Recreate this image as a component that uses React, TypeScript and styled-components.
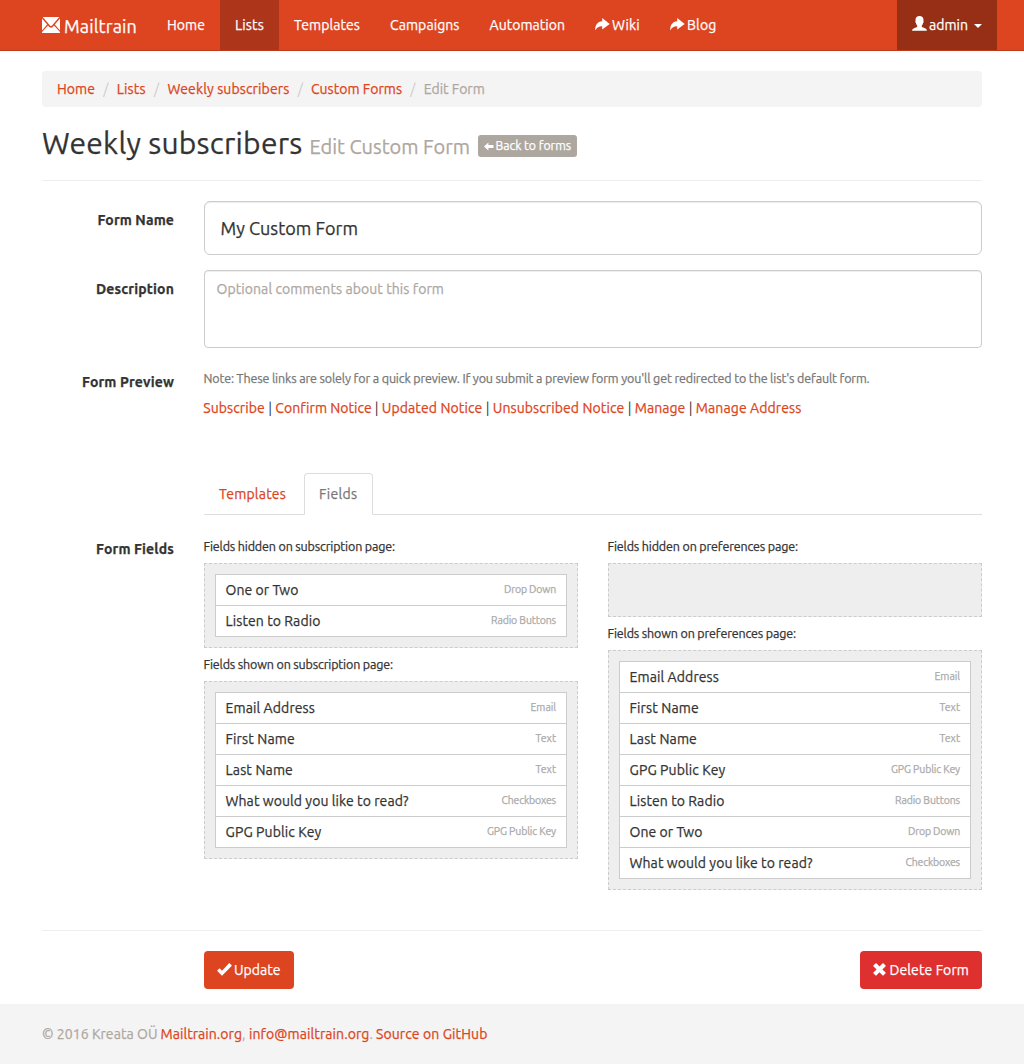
import React, { useLayoutEffect, useRef, useState } from "react";
import styled, { createGlobalStyle, css } from "styled-components";

const brand = "#dd4420";
const sans = `"Ubuntu", "Noto Sans", "Open Sans", sans-serif`;

const GlobalStyle = createGlobalStyle`
  *, *::before, *::after { box-sizing: border-box; }
  body {
    margin: 0;
    background: #fff;
    color: #333;
    font-family: ${sans};
    font-size: 14px;
    line-height: 20px;
    -webkit-text-stroke: 0.25px currentColor;
  }
  a { color: ${brand}; text-decoration: none; -webkit-text-stroke-color: currentColor; }
`;

/* Text set to a fixed measure, tracked evenly to fill it. */
const Measure = styled.span<{ $w: number }>`
  display: inline-block;
  width: ${(p) => p.$w}px;
  white-space: nowrap;
  -webkit-text-stroke-color: currentColor;
`;

function Fit({ w, children }: { w: number; children: string }) {
  const ref = useRef<HTMLSpanElement>(null);
  const [tracking, setTracking] = useState(0);
  useLayoutEffect(() => {
    const el = ref.current;
    if (!el) return;
    el.style.letterSpacing = "0px";
    const natural = el.getBoundingClientRect().width;
    const next = (w - natural) / children.length;
    el.style.letterSpacing = `${next}px`;
    setTracking(next);
  }, [w, children]);
  return (
    <Measure $w={w}>
      <span ref={ref} style={{ letterSpacing: tracking }}>
        {children}
      </span>
    </Measure>
  );
}

const Icon = styled.svg<{ $gap?: number; $drop?: number }>`
  display: block;
  flex: none;
  fill: currentColor;
  margin-right: ${(p) => p.$gap ?? 0}px;
  margin-top: ${(p) => p.$drop ?? 0}px;
`;

const EnvelopeIcon = () => (
  <Icon width="18" height="16" viewBox="0 0 18 16" $gap={4} $drop={-1}>
    <path d="M.7 0h16.6L10 8.6q-1 1-2 0z" />
    <path d="M0 1.4 5.2 7.6 0 13.4z" />
    <path d="M18 1.4v12L12.8 7.6z" />
    <path d="M6 8.5 7.3 10q1.7 1.6 3.4 0L12 8.5l6 6.4V16H0v-1.1z" />
  </Icon>
);

const ShareIcon = () => (
  <Icon width="15" height="13" viewBox="0 0 15 13" $gap={2} $drop={-2}>
    <path d="M7.200 0l7.500 5.900L7.200 11.600V8.300C4.200 8.200 1.900 9.300.2 12.400 0 7.200 2.500 3.500 7.200 3.200z" />
  </Icon>
);

const UserIcon = () => (
  <Icon width="15" height="15" viewBox="0 0 15 15" $gap={2} $drop={-3}>
    <path d="M7.500 0C9.900 0 11.500 1.500 11.500 3.800c0 .5-.1.900-.1 1.200.5.300.3 1.500-.3 2-.2 1.100-.7 1.900-1.300 2.500v1.100c0 .6 1 .9 2.500 1.500 1.700.6 2.500 1.100 2.600 2.700H.1c.1-1.600.9-2.100 2.600-2.700 1.500-.6 2.500-.9 2.500-1.500V9.500C4.600 8.900 4.100 8.100 3.900 7c-.6-.5-.8-1.700-.3-2 0-.3-.1-.7-.1-1.200C3.500 1.500 5.100 0 7.500 0z" />
  </Icon>
);

const ArrowIcon = () => (
  <Icon width="10" height="9" viewBox="0 0 10 9" $gap={1.5} $drop={2}>
    <path d="M0 4.500 4.400.5v2.400H9q.5 0 .5.500v2.200q0 .5-.5.500H4.400v2.400z" />
  </Icon>
);

const OkIcon = () => (
  <Icon width="15" height="13" viewBox="0 0 15 13" $gap={2.5} $drop={-1}>
    <path d="M12 .2q.3-.2.6.1l2 2q.3.300 0 .6L5.300 12.500q-.3.300-.6 0L.3 8.100Q0 7.800.3 7.500l1.900-1.900q.3-.3.600 0L5 7.700z" />
  </Icon>
);

const RemoveIcon = () => (
  <Icon width="13" height="13" viewBox="0 0 13 13" $gap={3.5} $drop={-2}>
    <path d="M3.300.3 6.500 3.500 9.700.3q.3-.3.600 0l2.300 2.300q.3.300 0 .6L9.400 6.400l3.200 3.200q.3.300 0 .6l-2.300 2.300q-.3.300-.6 0L6.500 9.300 3.300 12.500q-.3.300-.6 0L.4 10.200q-.3-.3 0-.6L3.600 6.400.4 3.200q-.3-.3 0-.6L2.700.3q.3-.3.600 0z" />
  </Icon>
);

const Navbar = styled.nav`
  height: 51px;
  background: ${brand};
  border-bottom: 1px solid #bd3a1b;
`;

const NavInner = styled.div`
  width: 970px;
  margin: 0 auto;
  display: flex;
`;

const Brand = styled.a`
  height: 50px;
  padding: 0 15px;
  display: flex;
  align-items: center;
  font-size: 18px;
  && { color: #fff; }
`;

const BrandText = styled.span`
  margin-top: 2px;
`;

const NavLink = styled.a<{ $tone?: string; $end?: boolean }>`
  height: 50px;
  padding: 0 15px;
  display: flex;
  align-items: center;
  background: ${(p) => p.$tone ?? "transparent"};
  && { color: #fff; }
  ${(p) => p.$end && css`margin-left: auto;`}
`;

const Caret = styled.i`
  margin: 1px 0 0 6px;
  border: 4px solid transparent;
  border-top-color: currentColor;
  border-bottom: 0;
`;

const Page = styled.main`
  width: 940px;
  margin: 20px auto 0;
`;

const Breadcrumb = styled.ol`
  display: flex;
  height: 36px;
  margin: 0;
  padding: 8px 15px;
  list-style: none;
  background: #f4f4f4;
  border-radius: 4px;
`;

const Crumb = styled.li`
  display: flex;
  color: #aea79f;
  & + &::before {
    content: "/";
    width: 21.700px;
    text-align: center;
    color: #ccc;
    -webkit-text-stroke: 0;
  }
`;

const PageHeader = styled.header`
  display: flex;
  align-items: baseline;
  height: 74px;
  padding-top: 17px;
  border-bottom: 1px solid #eee;
`;

const Title = styled.h2`
  margin: 0 7px 0 0;
  font-size: 30px;
  font-weight: 400;
  line-height: 38px;
`;

const Subtitle = styled.small`
  margin-right: 8px;
  color: #aea79f;
  font-size: 20px;
`;

const BackButton = styled.a`
  position: relative;
  top: -3px;
  display: inline-flex;
  align-items: center;
  width: 99px;
  height: 22px;
  padding: 0 6px;
  border-radius: 3px;
  background: #aea79f;
  font-size: 12.300px;
  && { color: #fff; }
`;

const FormRow = styled.div<{ $space: number }>`
  display: grid;
  grid-template-columns: 132px 1fr;
  column-gap: 30px;
  align-items: start;
  margin-top: ${(p) => p.$space}px;
`;

const Label = styled.label`
  padding-top: 9px;
  text-align: right;
  font-weight: 700;
`;

const control = css`
  display: block;
  width: 100%;
  border: 1px solid #ccc;
  border-radius: 4px;
  background: #fff;
  box-shadow: inset 0 1px 1px rgba(0, 0, 0, 0.075);
`;

const NameField = styled.div`
  ${control}
  height: 54px;
  padding: 0 15.500px;
  border-radius: 6px;
  font-size: 18px;
  line-height: 53px;
`;

const DescriptionField = styled.div`
  ${control}
  height: 78px;
  padding: 8px 11.500px;
  color: #aea79f;
`;

const Note = styled.p`
  margin: 0 0 0 -0.5px;
  height: 35px;
  padding-top: 5px;
  color: #777;
  font-size: 12.500px;
`;

const PreviewLinks = styled.div`
  display: flex;
  margin-left: -0.700px;
`;

const Bar = styled.span`
  width: 10.500px;
  text-align: center;
  -webkit-text-stroke: 0;
`;

const Tabs = styled.ul`
  display: flex;
  height: 42px;
  margin: 55px 0 0 162px;
  padding: 0;
  list-style: none;
  border-bottom: 1px solid #ddd;
`;

const Tab = styled.li<{ $active?: boolean; $w: number }>`
  width: ${(p) => p.$w}px;
  height: 42px;
  margin-right: 2px;
  padding: 10px 14px;
  border: 1px solid transparent;
  border-radius: 4px 4px 0 0;
  ${(p) =>
    p.$active &&
    css`
      color: #777;
      background: #fff;
      border-color: #ddd #ddd #fff;
    `}
`;

const Columns = styled.div`
  display: grid;
  grid-template-columns: 1fr 1fr;
  column-gap: 30px;
`;

const GroupTitle = styled.div`
  height: 33px;
  margin-left: -0.5px;
  padding-top: 6px;
  font-size: 12.500px;
`;

const DropZone = styled.div`
  min-height: 54px;
  padding: 10px;
  border: 1px dashed #ccc;
  background: #eee;
`;

const FieldList = styled.ul`
  margin: 0;
  padding: 0;
  list-style: none;
  border: 1px solid #ccc;
`;

const FieldItem = styled.li`
  display: flex;
  justify-content: space-between;
  height: 30px;
  padding: 0 10px 0 9.500px;
  background: #fff;
  line-height: 30px;
  & + & {
    height: 31px;
    border-top: 1px solid #ccc;
  }
`;

const FieldType = styled.small`
  color: #aaa;
  font-size: 10.500px;
  line-height: 29px;
`;

const Actions = styled.div`
  display: flex;
  justify-content: space-between;
  margin-top: 40px;
  padding: 20px 0 15px 162px;
  border-top: 1px solid #eee;
`;

const Button = styled.button<{ $danger?: boolean; $w: number }>`
  display: flex;
  align-items: center;
  width: ${(p) => p.$w}px;
  height: 38px;
  padding: 0 0 0 ${(p) => (p.$danger ? 13 : 12.5)}px;
  border: 0;
  border-radius: 4px;
  background: ${(p) => (p.$danger ? "#df3030" : brand)};
  color: #fff;
  font: 400 14px/20px ${sans};
`;

const Footer = styled.footer`
  height: 60px;
  background: #f4f4f4;
`;

const FooterInner = styled.div`
  display: flex;
  width: 940px;
  margin: 0 auto;
  padding-top: 20px;
  color: #aea79f;
  white-space: pre;
`;

const Gap = styled.span<{ $w: number }>`
  width: ${(p) => p.$w}px;
  -webkit-text-stroke: 0;
`;

type Field = [string, number, string, number];

const email: Field = ["Email Address", 89.5, "Email", 25.5];
const first: Field = ["First Name", 69.5, "Text", 20.5];
const last: Field = ["Last Name", 67.5, "Text", 20.5];
const gpg: Field = ["GPG Public Key", 96, "GPG Public Key", 69];
const radio: Field = ["Listen to Radio", 95, "Radio Buttons", 65];
const oneTwo: Field = ["One or Two", 73, "Drop Down", 52];
const read: Field = ["What would you like to read?", 183, "Checkboxes", 54.5];

function Group({ title, w, fields }: { title: string; w: number; fields: Field[] }) {
  return (
    <div>
      <GroupTitle>
        <Fit w={w}>{title}</Fit>
      </GroupTitle>
      <DropZone>
        {fields.length > 0 && (
          <FieldList>
            {fields.map(([name, nameW, type, typeW]) => (
              <FieldItem key={name}>
                <Fit w={nameW}>{name}</Fit>
                <FieldType>
                  <Fit w={typeW}>{type}</Fit>
                </FieldType>
              </FieldItem>
            ))}
          </FieldList>
        )}
      </DropZone>
    </div>
  );
}

const crumbs: [string, number][] = [
  ["Home", 38],
  ["Lists", 29],
  ["Weekly subscribers", 122],
  ["Custom Forms", 91],
];

const previews: [string, number][] = [
  ["Subscribe", 61.5],
  ["Confirm Notice", 96],
  ["Updated Notice", 100.5],
  ["Unsubscribed Notice", 131.5],
  ["Manage", 50.5],
  ["Manage Address", 105.5],
];

export default function App() {
  return (
    <>
      <GlobalStyle />
      <Navbar>
        <NavInner>
          <Brand href="#">
            <EnvelopeIcon />
            <BrandText><Fit w={73}>Mailtrain</Fit></BrandText>
          </Brand>
          <NavLink href="#"><Fit w={38}>Home</Fit></NavLink>
          <NavLink href="#" $tone="#ad3519"><Fit w={29}>Lists</Fit></NavLink>
          <NavLink href="#"><Fit w={66}>Templates</Fit></NavLink>
          <NavLink href="#"><Fit w={69.5}>Campaigns</Fit></NavLink>
          <NavLink href="#"><Fit w={75.5}>Automation</Fit></NavLink>
          <NavLink href="#"><ShareIcon /><Fit w={28}>Wiki</Fit></NavLink>
          <NavLink href="#"><ShareIcon /><Fit w={29.5}>Blog</Fit></NavLink>
          <NavLink href="#" $tone="#972e16" $end>
            <UserIcon />
            <Fit w={39}>admin</Fit>
            <Caret />
          </NavLink>
        </NavInner>
      </Navbar>

      <Page>
        <Breadcrumb>
          {crumbs.map(([text, w]) => (
            <Crumb key={text}>
              <a href="#"><Fit w={w}>{text}</Fit></a>
            </Crumb>
          ))}
          <Crumb><Fit w={61}>Edit Form</Fit></Crumb>
        </Breadcrumb>

        <PageHeader>
          <Title><Fit w={260.5}>Weekly subscribers</Fit></Title>
          <Subtitle><Fit w={160.5}>Edit Custom Form</Fit></Subtitle>
          <BackButton href="#">
            <ArrowIcon />
            <Fit w={75.5}>Back to forms</Fit>
          </BackButton>
        </PageHeader>

        <FormRow $space={20}>
          <Label><Fit w={76.5}>Form Name</Fit></Label>
          <NameField><Fit w={137.5}>My Custom Form</Fit></NameField>
        </FormRow>

        <FormRow $space={15}>
          <Label><Fit w={78}>Description</Fit></Label>
          <DescriptionField><Fit w={227.5}>Optional comments about this form</Fit></DescriptionField>
        </FormRow>

        <FormRow $space={15}>
          <Label><Fit w={92}>Form Preview</Fit></Label>
          <div>
            <Note>
              <Fit w={666}>
                Note: These links are solely for a quick preview. If you submit a preview form you'll get redirected to the list's default form.
              </Fit>
            </Note>
            <PreviewLinks>
              {previews.map(([text, w], i) => (
                <React.Fragment key={text}>
                  {i > 0 && <Bar>|</Bar>}
                  <a href="#"><Fit w={w}>{text}</Fit></a>
                </React.Fragment>
              ))}
            </PreviewLinks>
          </div>
        </FormRow>

        <Tabs>
          <Tab $w={98}><a href="#"><Fit w={67}>Templates</Fit></a></Tab>
          <Tab $w={69} $active><Fit w={38.5}>Fields</Fit></Tab>
        </Tabs>

        <FormRow $space={15}>
          <Label><Fit w={78}>Form Fields</Fit></Label>
          <Columns>
            <div>
              <Group title="Fields hidden on subscription page:" w={191.5} fields={[oneTwo, radio]} />
              <Group title="Fields shown on subscription page:" w={189.5} fields={[email, first, last, read, gpg]} />
            </div>
            <div>
              <Group title="Fields hidden on preferences page:" w={190.5} fields={[]} />
              <Group title="Fields shown on preferences page:" w={188.5} fields={[email, first, last, gpg, radio, oneTwo, read]} />
            </div>
          </Columns>
        </FormRow>

        <Actions>
          <Button $w={90}><OkIcon /><Fit w={46.5}>Update</Fit></Button>
          <Button $w={122} $danger><RemoveIcon /><Fit w={79.5}>Delete Form</Fit></Button>
        </Actions>
      </Page>

      <Footer>
        <FooterInner>
          <Fit w={115.5}>© 2016 Kreata OÜ</Fit>
          <Gap $w={3} />
          <a href="#"><Fit w={81.5}>Mailtrain.org</Fit></a>
          <Gap $w={7}>,</Gap>
          <a href="#"><Fit w={120.5}>info@mailtrain.org</Fit></a>
          <Gap $w={6.5}>.</Gap>
          <a href="#"><Fit w={111.5}>Source on GitHub</Fit></a>
        </FooterInner>
      </Footer>
    </>
  );
}
